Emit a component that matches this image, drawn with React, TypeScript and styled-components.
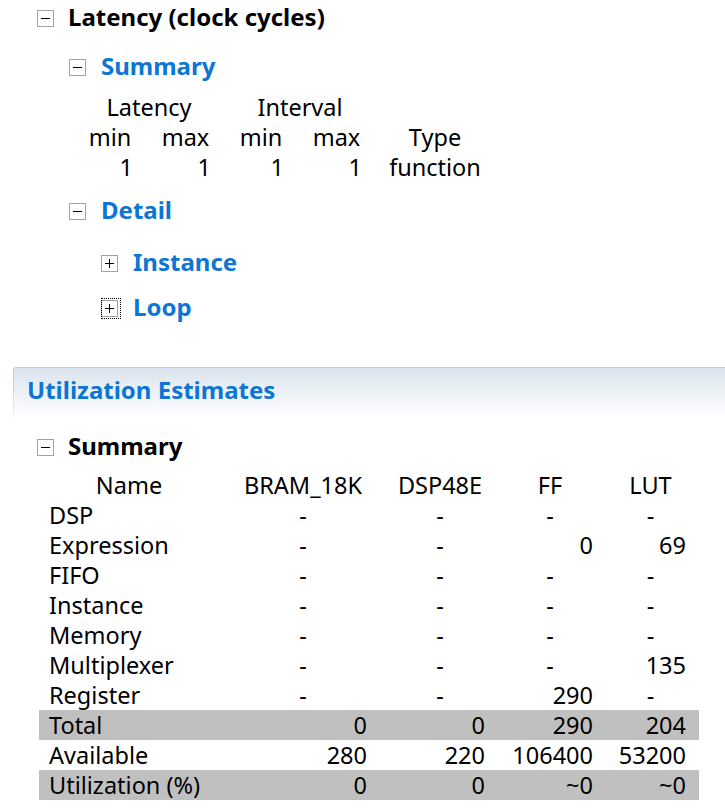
import React from "react";
import styled, { createGlobalStyle, css } from "styled-components";

const GlobalStyle = createGlobalStyle`
  html, body { margin: 0; padding: 0; background: #ffffff; }
  body {
    font-family: "Noto Sans", "Open Sans", sans-serif;
    color: #000000;
  }
`;

const BLUE = "#0b76d6";

const Page = styled.div`
  width: 725px;
  height: 810px;
  overflow: hidden;
  display: flex;
  flex-direction: column;
  padding-top: 2px;
  box-sizing: border-box;
`;

const TreeRow = styled.div<{ $indent: number; $top: number }>`
  display: flex;
  align-items: center;
  gap: 14px;
  height: 30px;
  margin-top: ${(p) => p.$top}px;
  padding-left: ${(p) => p.$indent}px;
`;

const Title = styled.span<{ $blue?: boolean }>`
  font-size: 24px;
  font-weight: 700;
  line-height: 30px;
  white-space: nowrap;
  color: ${(p) => (p.$blue ? BLUE : "#000000")};
  ${(p) => p.$blue && css`padding-left: 1px;`}
`;

const ToggleBox = styled.span<{ $focused?: boolean }>`
  position: relative;
  box-sizing: border-box;
  flex: none;
  width: 17px;
  height: 17px;
  margin-top: 2px;
  border: 1px solid #a3a3a3;
  background: #ffffff;
  display: block;
  svg { display: block; }
  ${(p) =>
    p.$focused &&
    css`
      &::after {
        content: "";
        position: absolute;
        left: -1px;
        top: -3px;
        right: -4px;
        bottom: -3px;
        border: 1px dotted #000000;
      }
    `}
`;

const Toggle: React.FC<{ open: boolean; focused?: boolean }> = ({ open, focused }) => (
  <ToggleBox $focused={focused}>
    <svg width="15" height="15" viewBox="0 0 15 15">
      <path d="M3 7.5h9" stroke="#000" strokeWidth="1" />
      {!open && <path d="M7.5 3v9" stroke="#000" strokeWidth="1" />}
    </svg>
  </ToggleBox>
);

/* Latency summary table */
const LatTable = styled.div`
  margin: 11px 0 0 87px;
  font-size: 23.5px;
  line-height: 30px;
`;

const LatRow = styled.div`
  display: grid;
  grid-template-columns: 46px 78px 73px 78px 119px;
  height: 30px;
`;

const LatCell = styled.span<{ $align: "left" | "center" | "right"; $span?: number }>`
  text-align: ${(p) => p.$align};
  white-space: nowrap;
  padding-left: 27px;
  ${(p) => p.$span && css`grid-column: span ${p.$span};`}
  &:first-child { padding-left: 0; }
`;

/* Utilization panel */
const Panel = styled.section`
  position: relative;
  margin: 45px 0 0 13px;
  border-top: 1px solid #c2cad5;
  border-top-left-radius: 3px;
  background: linear-gradient(to bottom, #dbe4ee 0px, #ffffff 50px);
  padding: 7px 0 17px 14px;
  &::before {
    content: "";
    position: absolute;
    left: 0;
    top: 0;
    width: 1px;
    height: 60px;
    background: linear-gradient(to bottom, #c2cad5, rgba(255, 255, 255, 0));
  }
  & > span { padding-left: 0; }
`;

const UtilTable = styled.div`
  margin: 9px 0 0 39px;
  font-size: 23.5px;
  line-height: 30px;
`;

const UtilRow = styled.div<{ $shade?: boolean }>`
  display: grid;
  grid-template-columns: 160px 158px 118px 108px 93px;
  width: 660px;
  height: 30px;
  box-sizing: border-box;
  padding: 0 14px 0 10px;
  background: ${(p) => (p.$shade ? "#c0c0c0" : "transparent")};
  & > :nth-child(2) { padding-left: 30px; }
  & > :nth-child(3) { padding-left: 28px; }
  & > :nth-child(4) { padding-left: 22px; }
  & > :nth-child(5) { padding-left: 22px; }
`;

const UtilCell = styled.span<{ $align: "left" | "center" | "right" }>`
  text-align: ${(p) => p.$align};
  white-space: nowrap;
`;

const utilHeader = ["Name", "BRAM_18K", "DSP48E", "FF", "LUT"];
const utilRows: { name: string; vals: string[]; shade?: boolean }[] = [
  { name: "DSP", vals: ["-", "-", "-", "-"] },
  { name: "Expression", vals: ["-", "-", "0", "69"] },
  { name: "FIFO", vals: ["-", "-", "-", "-"] },
  { name: "Instance", vals: ["-", "-", "-", "-"] },
  { name: "Memory", vals: ["-", "-", "-", "-"] },
  { name: "Multiplexer", vals: ["-", "-", "-", "135"] },
  { name: "Register", vals: ["-", "-", "290", "-"] },
  { name: "Total", vals: ["0", "0", "290", "204"], shade: true },
  { name: "Available", vals: ["280", "220", "106400", "53200"] },
  { name: "Utilization (%)", vals: ["0", "0", "~0", "~0"], shade: true },
];

export default function App() {
  return (
    <>
      <GlobalStyle />
      <Page>
        <TreeRow $indent={37} $top={0}>
          <Toggle open />
          <Title>Latency (clock cycles)</Title>
        </TreeRow>
        <TreeRow $indent={69} $top={19}>
          <Toggle open />
          <Title $blue>Summary</Title>
        </TreeRow>

        <LatTable>
          <LatRow>
            <LatCell $align="center" $span={2}>Latency</LatCell>
            <LatCell $align="center" $span={2}>Interval</LatCell>
            <LatCell $align="center" />
          </LatRow>
          <LatRow>
            <LatCell $align="center">min</LatCell>
            <LatCell $align="center">max</LatCell>
            <LatCell $align="center">min</LatCell>
            <LatCell $align="center">max</LatCell>
            <LatCell $align="center">Type</LatCell>
          </LatRow>
          <LatRow>
            <LatCell $align="right">1</LatCell>
            <LatCell $align="right">1</LatCell>
            <LatCell $align="right">1</LatCell>
            <LatCell $align="right">1</LatCell>
            <LatCell $align="center">function</LatCell>
          </LatRow>
        </LatTable>

        <TreeRow $indent={69} $top={13}>
          <Toggle open />
          <Title $blue>Detail</Title>
        </TreeRow>
        <TreeRow $indent={101} $top={22}>
          <Toggle open={false} />
          <Title $blue>Instance</Title>
        </TreeRow>
        <TreeRow $indent={101} $top={15}>
          <Toggle open={false} focused />
          <Title $blue>Loop</Title>
        </TreeRow>

        <Panel>
          <Title $blue>Utilization Estimates</Title>
        </Panel>

        <TreeRow $indent={37} $top={9}>
          <Toggle open />
          <Title>Summary</Title>
        </TreeRow>

        <UtilTable>
          <UtilRow>
            {utilHeader.map((h) => (
              <UtilCell key={h} $align="center">{h}</UtilCell>
            ))}
          </UtilRow>
          {utilRows.map((r) => (
            <UtilRow key={r.name} $shade={r.shade}>
              <UtilCell $align="left">{r.name}</UtilCell>
              {r.vals.map((v, i) => (
                <UtilCell key={i} $align={v === "-" ? "center" : "right"}>{v}</UtilCell>
              ))}
            </UtilRow>
          ))}
        </UtilTable>
      </Page>
    </>
  );
}
